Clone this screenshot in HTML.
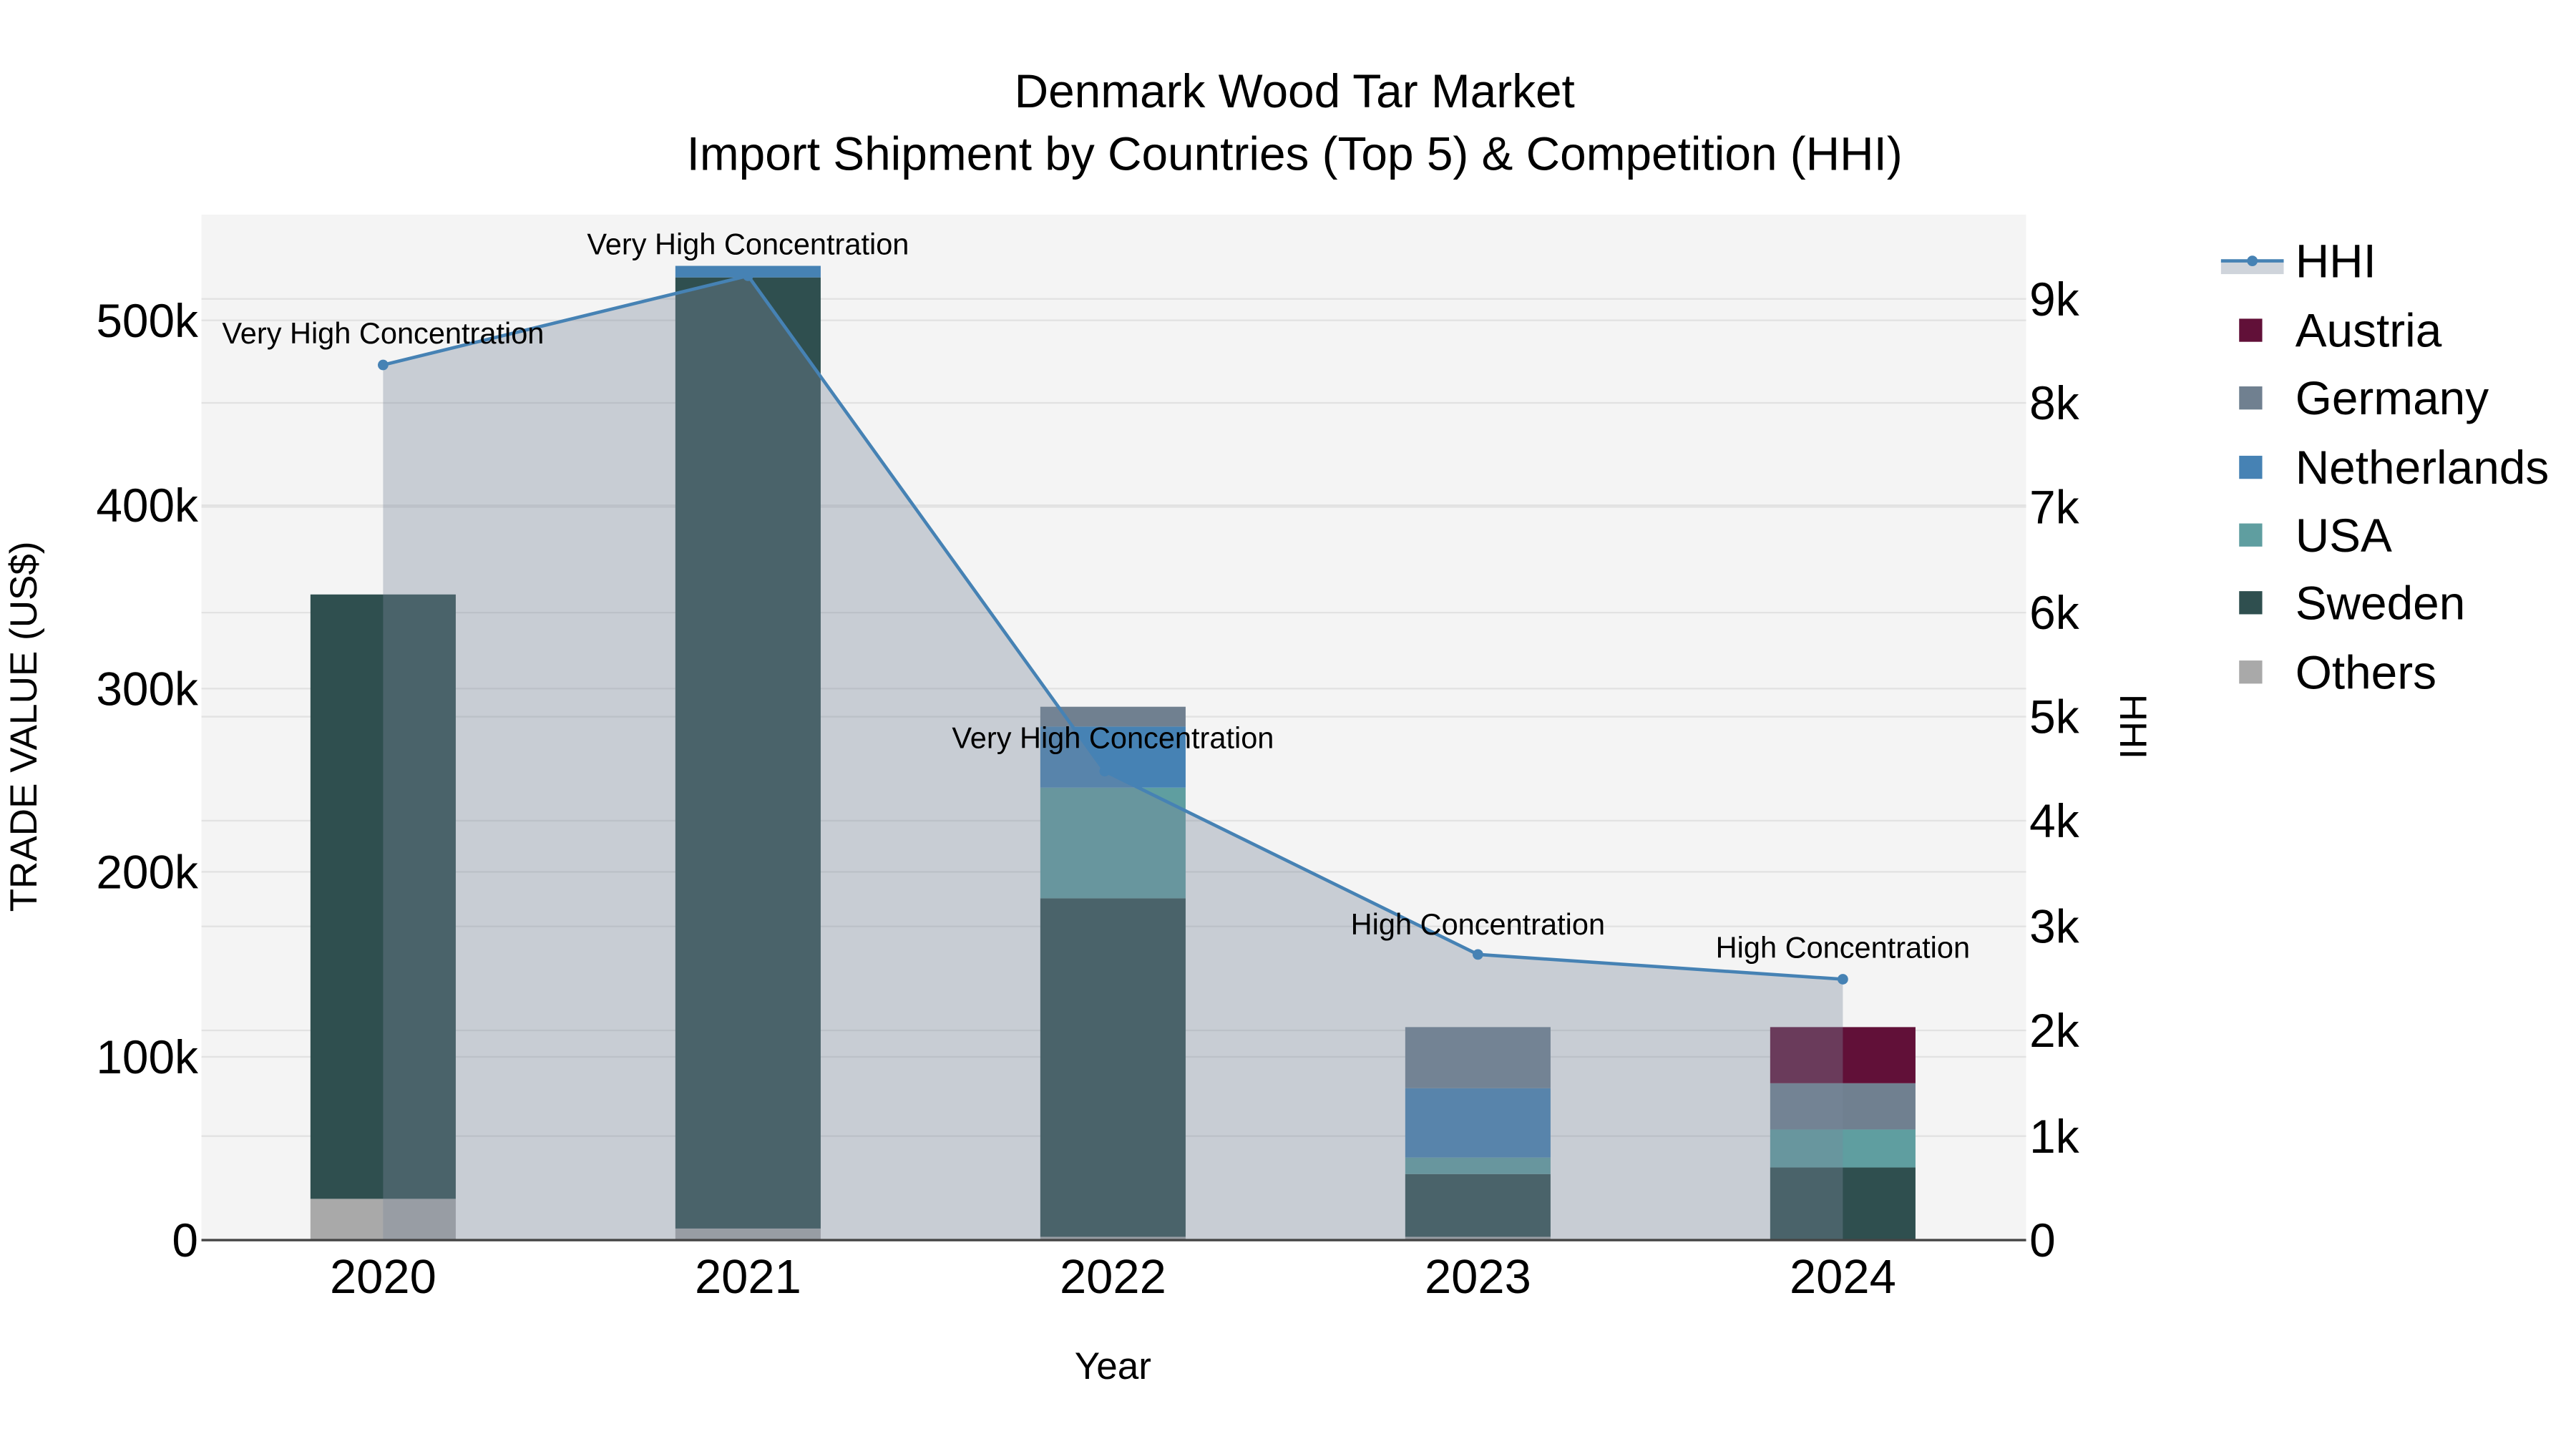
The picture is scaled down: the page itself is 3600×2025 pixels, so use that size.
<!DOCTYPE html>
<html><head><meta charset="utf-8"><style>
html,body{margin:0;padding:0;background:#fff;}
svg{display:block;}
text{font-family:"Liberation Sans",sans-serif;fill:#000;}
</style></head><body>
<svg width="3600" height="2025" viewBox="0 0 1560 877.5" preserveAspectRatio="none">
<rect x="0" y="0" width="1560" height="878" fill="#fff"/>
<rect x="122" y="130" width="1105" height="621" fill="#f4f4f4"/>
<g stroke="#e2e2e2" stroke-width="1">
<line x1="122" x2="1227" y1="640" y2="640"/><line x1="122" x2="1227" y1="528" y2="528"/><line x1="122" x2="1227" y1="417" y2="417"/><line x1="122" x2="1227" y1="306" y2="306"/><line x1="122" x2="1227" y1="194" y2="194"/>
<line x1="122" x2="1227" y1="688" y2="688"/><line x1="122" x2="1227" y1="624" y2="624"/><line x1="122" x2="1227" y1="561" y2="561"/><line x1="122" x2="1227" y1="497" y2="497"/><line x1="122" x2="1227" y1="434" y2="434"/><line x1="122" x2="1227" y1="371" y2="371"/><line x1="122" x2="1227" y1="307" y2="307"/><line x1="122" x2="1227" y1="244" y2="244"/><line x1="122" x2="1227" y1="181" y2="181"/>
</g>
<rect x="188" y="726" width="88" height="25" fill="#a9a9a9"/>
<rect x="188" y="360" width="88" height="366" fill="#2f4f4f"/>
<rect x="409" y="744" width="88" height="7" fill="#a9a9a9"/>
<rect x="409" y="168" width="88" height="576" fill="#2f4f4f"/>
<rect x="409" y="161" width="88" height="7" fill="#4682b4"/>
<rect x="630" y="749" width="88" height="2" fill="#a9a9a9"/>
<rect x="630" y="544" width="88" height="205" fill="#2f4f4f"/>
<rect x="630" y="477" width="88" height="67" fill="#5f9ea0"/>
<rect x="630" y="440" width="88" height="37" fill="#4682b4"/>
<rect x="630" y="428" width="88" height="12" fill="#708090"/>
<rect x="851" y="749" width="88" height="2" fill="#a9a9a9"/>
<rect x="851" y="711" width="88" height="38" fill="#2f4f4f"/>
<rect x="851" y="701" width="88" height="10" fill="#5f9ea0"/>
<rect x="851" y="659" width="88" height="42" fill="#4682b4"/>
<rect x="851" y="622" width="88" height="37" fill="#708090"/>
<rect x="1072" y="707" width="88" height="44" fill="#2f4f4f"/>
<rect x="1072" y="684" width="88" height="23" fill="#5f9ea0"/>
<rect x="1072" y="656" width="88" height="28" fill="#708090"/>
<rect x="1072" y="622" width="88" height="34" fill="#611038"/>
<polygon points="232,751 232,221 453,167 669,467 895,578 1116,593 1116,751" fill="rgb(122,136,155)" fill-opacity="0.36"/>
<polyline points="232,221 453,167 669,467 895,578 1116,593" fill="none" stroke="#4682b4" stroke-width="2"/>
<g fill="#4682b4"><circle cx="232" cy="221" r="3.2"/><circle cx="453" cy="167" r="3.2"/><circle cx="669" cy="467" r="3.2"/><circle cx="895" cy="578" r="3.2"/><circle cx="1116" cy="593" r="3.2"/></g>
<line x1="122" x2="1227" y1="751" y2="751" stroke="#444" stroke-width="1.5"/>
<g font-size="18" text-anchor="middle">
<text x="232" y="208">Very High Concentration</text>
<text x="453" y="154">Very High Concentration</text>
<text x="674" y="453">Very High Concentration</text>
<text x="895" y="566">High Concentration</text>
<text x="1116" y="580">High Concentration</text>
</g>
<g font-size="28.5" text-anchor="middle" fill="#222">
<text x="784" y="65">Denmark Wood Tar Market</text>
<text x="784" y="103">Import Shipment by Countries (Top 5) &amp; Competition (HHI)</text>
</g>
<g font-size="28.5" text-anchor="end">
<text x="120" y="761">0</text><text x="120" y="650">100k</text><text x="120" y="538">200k</text><text x="120" y="427">300k</text><text x="120" y="316">400k</text><text x="120" y="204">500k</text>
</g>
<g font-size="28.5" text-anchor="start">
<text x="1229" y="761">0</text><text x="1229" y="698">1k</text><text x="1229" y="634">2k</text><text x="1229" y="571">3k</text><text x="1229" y="507">4k</text><text x="1229" y="444">5k</text><text x="1229" y="381">6k</text><text x="1229" y="317">7k</text><text x="1229" y="254">8k</text><text x="1229" y="191">9k</text>
</g>
<g font-size="29" text-anchor="middle">
<text x="232" y="783">2020</text><text x="453" y="783">2021</text><text x="674" y="783">2022</text><text x="895" y="783">2023</text><text x="1116" y="783">2024</text>
</g>
<text x="674" y="835" font-size="23" text-anchor="middle">Year</text>
<text transform="translate(22,440) rotate(-90)" font-size="23" text-anchor="middle">TRADE VALUE (US$)</text>
<text transform="translate(1284,440) rotate(90)" font-size="23" text-anchor="middle">HHI</text>
<rect x="1345" y="158" width="38" height="8" fill="rgb(122,136,155)" fill-opacity="0.36"/>
<line x1="1345" x2="1383" y1="158" y2="158" stroke="#4682b4" stroke-width="2"/>
<circle cx="1364" cy="158" r="3.2" fill="#4682b4"/>
<rect x="1356" y="193" width="14" height="14" fill="#611038"/>
<rect x="1356" y="234" width="14" height="14" fill="#708090"/>
<rect x="1356" y="276" width="14" height="14" fill="#4682b4"/>
<rect x="1356" y="317" width="14" height="14" fill="#5f9ea0"/>
<rect x="1356" y="358" width="14" height="14" fill="#2f4f4f"/>
<rect x="1356" y="400" width="14" height="14" fill="#a9a9a9"/>
<g font-size="28.5">
<text x="1390" y="168">HHI</text>
<text x="1390" y="210">Austria</text>
<text x="1390" y="251">Germany</text>
<text x="1390" y="293">Netherlands</text>
<text x="1390" y="334">USA</text>
<text x="1390" y="375">Sweden</text>
<text x="1390" y="417">Others</text>
</g>
</svg>
</body></html>
